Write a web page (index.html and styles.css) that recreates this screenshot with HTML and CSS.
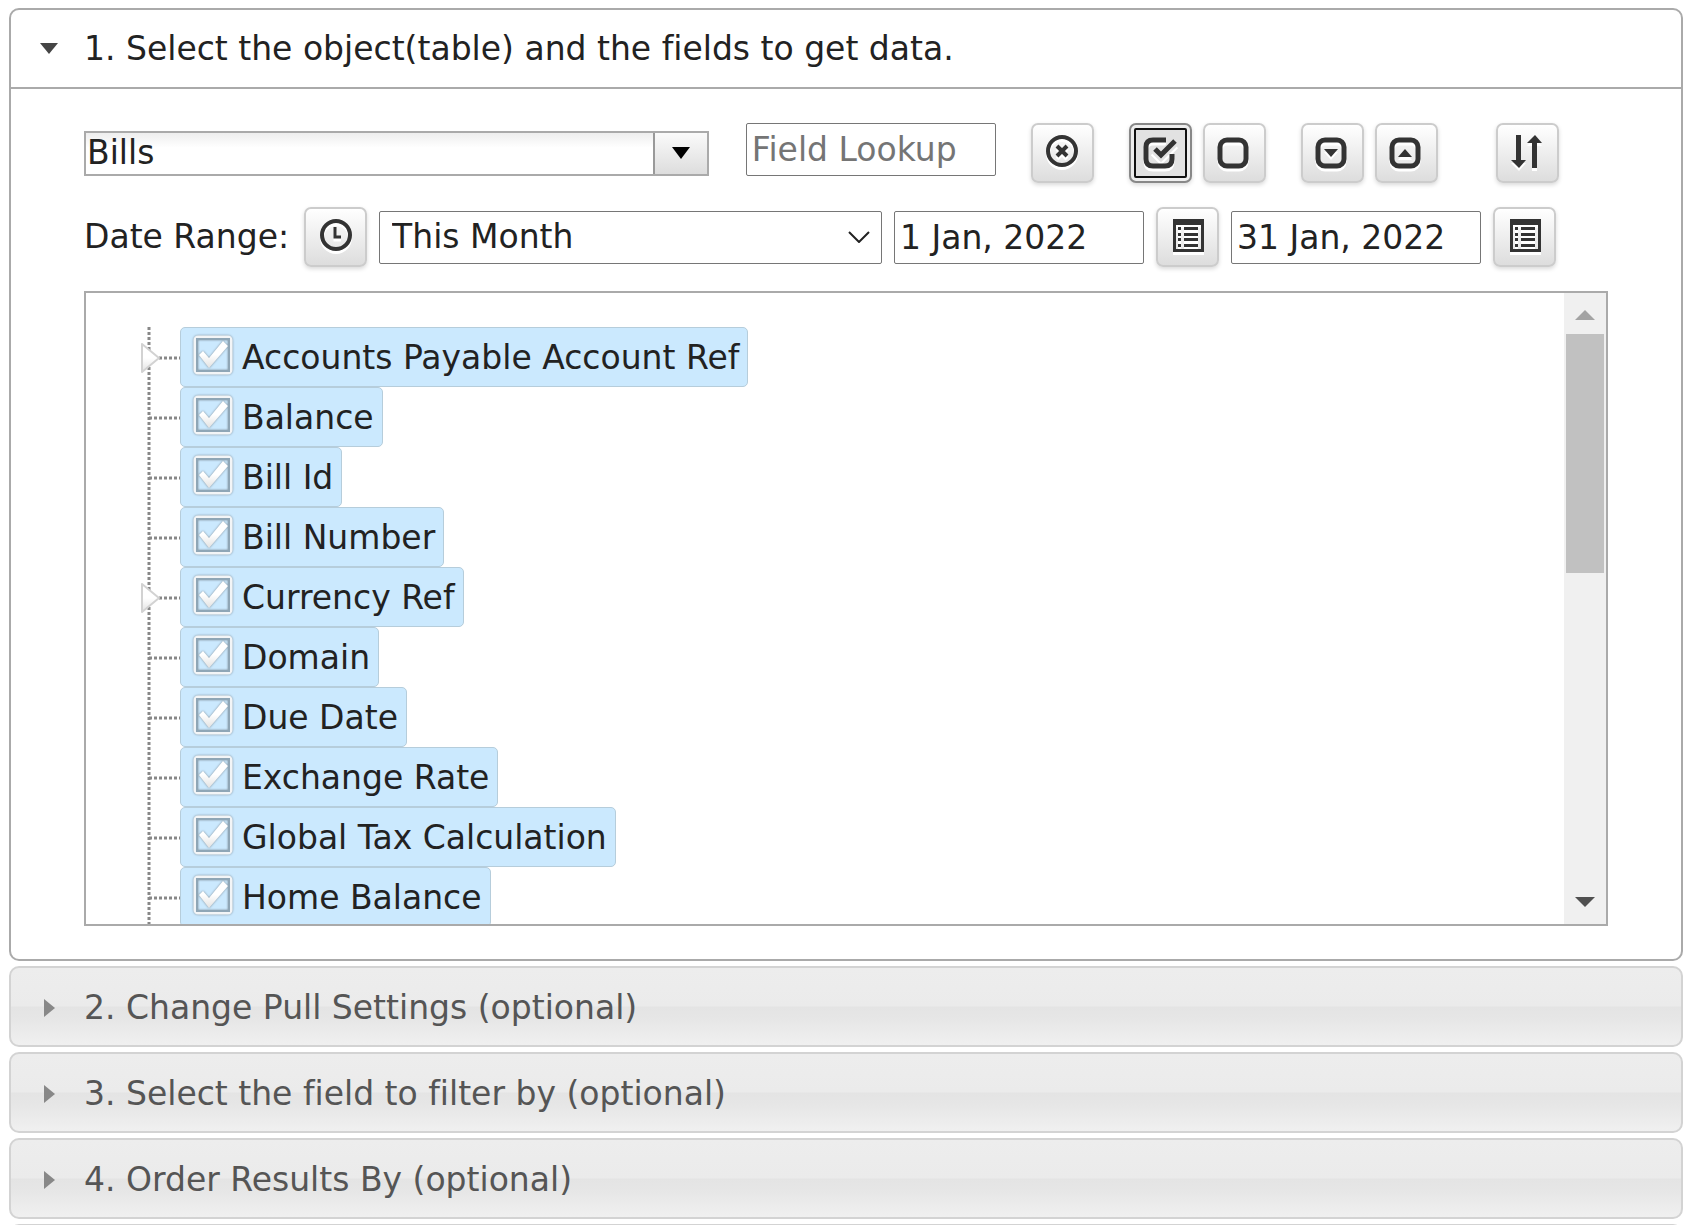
FILE: index.html
```html
<!DOCTYPE html>
<html lang="en">
<head>
    <meta charset="UTF-8">
    <meta name="viewport" content="width=device-width, initial-scale=1.0">
    <title>Get Data</title>
    <link rel="stylesheet" href="styles.css">
</head>
<body>
    <!-- shared icon shapes -->
    <svg class="defs" aria-hidden="true">
        <defs>
            <linearGradient id="shine" x1="0" y1="0" x2="0" y2="1">
                <stop offset="0.5" stop-color="#fff"/>
                <stop offset="1" stop-color="#e2e2e2"/>
            </linearGradient>
            <symbol id="list" viewBox="0 0 36 36">
                <path fill="#333" fill-rule="evenodd" d="M4 0h31v33H4zM7 6v24h25V6z"/>
                <path fill="#333" d="M9 8h3v3H9zM9 14h3v3H9zM9 19h3v3H9zM9 25h3v3H9zM15 8h14v3H15zM15 14h14v3H15zM15 19h14v3H15zM15 25h14v3H15z"/>
            </symbol>
        </defs>
    </svg>

    <div class="accordion">
        <button class="header active" aria-expanded="true">
            <svg class="arrow" viewBox="0 0 18 18"><path d="M0 3h18l-9 11z"/></svg>
            1. Select the object(table) and the fields to get data.
        </button>
        <div class="panel">
            <div class="row toolbar">
                <div class="combo">
                    <input type="text" value="Bills" aria-label="Object">
                    <button aria-label="Show objects"><svg width="18" height="12" viewBox="0 0 18 12"><path d="M0 0h18L9 12z"/></svg></button>
                </div>
                <input class="field lookup" type="text" placeholder="Field Lookup" aria-label="Field Lookup">
                <button class="btn apart" aria-label="Clear lookup">
                    <svg viewBox="0 0 36 36"><g fill="none" stroke="#333"><circle cx="18" cy="16" r="14" stroke-width="4"/><path d="M13 11l10 10M23 11L13 21" stroke-width="4"/></g></svg>
                </button>
                <button class="btn apart focused" aria-label="Check all">
                    <svg viewBox="0 0 36 36"><path fill="none" stroke="#333" stroke-width="5" d="M24 5H11Q4 5 4 12v12q0 7 7 7h12q7 0 7-7v-5"/><path fill="none" stroke="#e2e2e2" stroke-width="9" d="M12 14l7 7L33 7"/><path fill="none" stroke="#333" stroke-width="5" d="M13 14l6 6L33 6"/></svg>
                </button>
                <button class="btn" aria-label="Uncheck all">
                    <svg viewBox="0 0 36 36"><rect x="4" y="5" width="26" height="26" rx="7" fill="none" stroke="#333" stroke-width="5"/></svg>
                </button>
                <button class="btn apart" aria-label="Expand all">
                    <svg viewBox="0 0 36 36"><rect x="4" y="5" width="26" height="26" rx="7" fill="none" stroke="#333" stroke-width="5"/><path fill="#333" d="M10 14h14l-7 8z"/></svg>
                </button>
                <button class="btn" aria-label="Collapse all">
                    <svg viewBox="0 0 36 36"><rect x="4" y="5" width="26" height="26" rx="7" fill="none" stroke="#333" stroke-width="5"/><path fill="#333" d="M10 22h14l-7-8z"/></svg>
                </button>
                <button class="btn far" aria-label="Sort fields">
                    <svg viewBox="0 0 36 36"><path fill="#333" d="M7 0h5v25h5l-7 8-8-8h5zM23 33h5V8h5l-7-8-8 8h5z"/></svg>
                </button>
            </div>

            <div class="row">
                <label for="range">Date Range:</label>
                <button class="btn" aria-label="Pick date range">
                    <svg viewBox="0 0 36 36"><circle cx="18" cy="16" r="14" fill="none" stroke="#333" stroke-width="4"/><path fill="none" stroke="#333" stroke-width="3" d="M17 8v10h6"/></svg>
                </button>
                <div class="select">
                    <select class="field" id="range">
                        <option>This Month</option>
                    </select>
                    <svg width="22" height="12" viewBox="0 0 22 12"><path fill="none" stroke="#222" stroke-width="2" d="M1 1l10 10L21 1"/></svg>
                </div>
                <input class="field" type="text" value="1 Jan, 2022" aria-label="Start date">
                <button class="btn" aria-label="Pick start date"><svg><use href="#list"/></svg></button>
                <input class="field" type="text" value="31 Jan, 2022" aria-label="End date">
                <button class="btn" aria-label="Pick end date"><svg><use href="#list"/></svg></button>
            </div>

            <div class="box">
                <ul class="tree" id="tree"></ul>
                <div class="scroll">
                    <svg width="20" height="10" viewBox="0 0 20 10"><path fill="#a3a3a3" d="M0 10h20L10 0z"/></svg>
                    <div class="track"><div class="thumb"></div></div>
                    <svg width="20" height="10" viewBox="0 0 20 10"><path fill="#505050" d="M0 0h20L10 10z"/></svg>
                </div>
            </div>
        </div>

        <button class="header"><svg class="arrow" viewBox="0 0 18 18"><path d="M4 0v18l11-9z"/></svg>2. Change Pull Settings (optional)</button>
        <button class="header"><svg class="arrow" viewBox="0 0 18 18"><path d="M4 0v18l11-9z"/></svg>3. Select the field to filter by (optional)</button>
        <button class="header"><svg class="arrow" viewBox="0 0 18 18"><path d="M4 0v18l11-9z"/></svg>4. Order Results By (optional)</button>
        <div class="header"></div>
    </div>

    <script>
        const fields = [
            { name: "Accounts Payable Account Ref", parent: true },
            { name: "Balance" },
            { name: "Bill Id" },
            { name: "Bill Number" },
            { name: "Currency Ref", parent: true },
            { name: "Domain" },
            { name: "Due Date" },
            { name: "Exchange Rate" },
            { name: "Global Tax Calculation" },
            { name: "Home Balance" }
        ];

        document.getElementById("tree").innerHTML = fields.map(field => `
            <li>
                <svg class="branch" viewBox="0 0 40 60">
                    <path d="M9 0v60" stroke="#888" stroke-width="3" stroke-dasharray="3 2"/>
                    <path d="M9 31h31" stroke="#888" stroke-width="3" stroke-dasharray="3 2"/>
                    ${field.parent ? `<path class="toggle" d="M2 17v28l17-14z"/>` : ""}
                </svg>
                <label class="node">
                    <input type="checkbox" checked>
                    <svg class="check" viewBox="0 0 42 42">
                        <rect x="3" y="3" width="36" height="36" rx="3" fill="none" stroke="#f3f5f7" stroke-width="3"/>
                        <rect x="5" y="5" width="32" height="32" fill="none" stroke="#8fa6b6" stroke-width="2"/>
                        <path d="M7 21l4-4 6 7L31 7l5 5-19 22z" fill="url(#shine)"/>
                    </svg>
                    ${field.name}
                </label>
            </li>
        `).join("");
    </script>
</body>
</html>
```
FILE: styles.css
```css
* {
    box-sizing: border-box;
}
body {
    margin: 8px 12px 0 9px;
    background: white;
    color: #222;
    font-family: Verdana, "DejaVu Sans", sans-serif;
    font-size: 33px;
    font-variant-ligatures: none;
    line-height: 40px;
}
input, select, button {
    font: inherit;
    color: inherit;
}
.defs {
    display: block;
    width: 0;
    height: 0;
}
.header {
    display: flex;
    align-items: center;
    width: 100%;
    height: 81px;
    margin: 5px 0 0;
    padding: 2px 29px 0;
    border: 2px solid #d3d3d3;
    border-radius: 10px;
    background: linear-gradient(#ededed, #ebebeb 49%, #e4e4e4 51%, #e6e6e6 65%, #f0f0f0);
    color: #555;
    text-align: left;
    cursor: pointer;
}
.header.active {
    margin: 0;
    padding-top: 0;
    border-color: #aaa;
    border-radius: 10px 10px 0 0;
    background: white;
    color: #222;
}
.arrow {
    width: 18px;
    height: 18px;
    margin-right: 26px;
    fill: #888;
}
.active .arrow {
    fill: #454545;
}
.panel {
    display: flex;
    flex-direction: column;
    gap: 24px;
    padding: 34px 73px 33px;
    border: 2px solid #aaa;
    border-top: 0;
    border-radius: 0 0 10px 10px;
}
.row {
    display: flex;
    align-items: center;
    gap: 12px;
}
.row label {
    margin-right: 3px;
    white-space: nowrap;
}
.toolbar {
    gap: 11px;
}

/* object picker */
.combo {
    display: flex;
    flex: 0 0 41%;
    height: 45px;
    border: 2px solid #aaa;
    background: linear-gradient(#eee, #fff 36%);
}
.combo input {
    flex: 1;
    min-width: 0;
    padding: 0 1px;
    border: 0;
    background: none;
}
.combo button {
    display: flex;
    align-items: center;
    justify-content: center;
    width: 54px;
    padding: 0;
    border: 0;
    border-left: 2px solid #999;
    background: linear-gradient(#fafafa, #ddd);
}

.field {
    width: 250px;
    height: 53px;
    padding: 0 5px;
    border: 1px solid #767676;
    border-radius: 2px;
    background: white;
}
.field::placeholder {
    color: #757575;
}
.lookup {
    align-self: flex-start;
    margin-left: 26px;
}
.select {
    display: grid;
    flex: 0 0 33%;
    align-items: center;
}
.select select, .select svg {
    grid-area: 1 / 1;
}
.select select {
    width: 100%;
    padding: 0 12px;
    appearance: none;
}
.select svg {
    justify-self: end;
    margin-right: 12px;
    pointer-events: none;
}

.btn {
    display: flex;
    flex: none;
    align-items: center;
    justify-content: center;
    width: 63px;
    height: 60px;
    padding: 0;
    border: 2px solid #ccc;
    border-radius: 7px;
    background: linear-gradient(#fff, #ddd);
    box-shadow: 0 2px 4px rgba(0, 0, 0, 0.15);
    cursor: pointer;
}
.btn svg {
    width: 36px;
    height: 36px;
    filter: drop-shadow(0 3px 0 white);
}
.apart {
    margin-left: 24px;
}
.far {
    margin-left: 47px;
}
.focused {
    border-color: #888;
    background: #e2e2e2;
    box-shadow: inset 0 0 0 3px #eee, 0 2px 4px rgba(0, 0, 0, 0.15);
    outline: 2px solid #111;
    outline-offset: -7px;
}

/* field tree */
.box {
    display: flex;
    height: 635px;
    border: 2px solid #aaa;
}
.tree {
    flex: 1;
    margin: 0;
    padding: 34px 0 0 54px;
    overflow: hidden;
    list-style: none;
}
.tree li {
    display: flex;
    height: 60px;
}
.branch {
    width: 40px;
    height: 60px;
}
.toggle {
    fill: url(#shine);
    stroke: #d2d2d2;
    stroke-width: 2;
    stroke-linejoin: round;
}
.node {
    display: flex;
    align-items: center;
    padding: 2px 8px 0 11px;
    border: 1px solid #b6cddb;
    border-radius: 5px;
    background: #cbe9fe;
    white-space: nowrap;
}
.node input {
    width: 0;
    height: 0;
    margin: 0;
    opacity: 0;
}
.check {
    width: 42px;
    height: 42px;
    margin: 0 8px 6px 0;
    filter: drop-shadow(0 0 1px #7d8d99);
}
.node input:not(:checked) + .check path {
    display: none;
}
.scroll {
    display: flex;
    flex-direction: column;
    align-items: center;
    width: 42px;
    padding: 17px 0;
    background: #f0f0f0;
}
.track {
    flex: 1;
    width: 38px;
    padding: 14px 0;
}
.thumb {
    height: 239px;
    background: #c1c1c1;
}
```
